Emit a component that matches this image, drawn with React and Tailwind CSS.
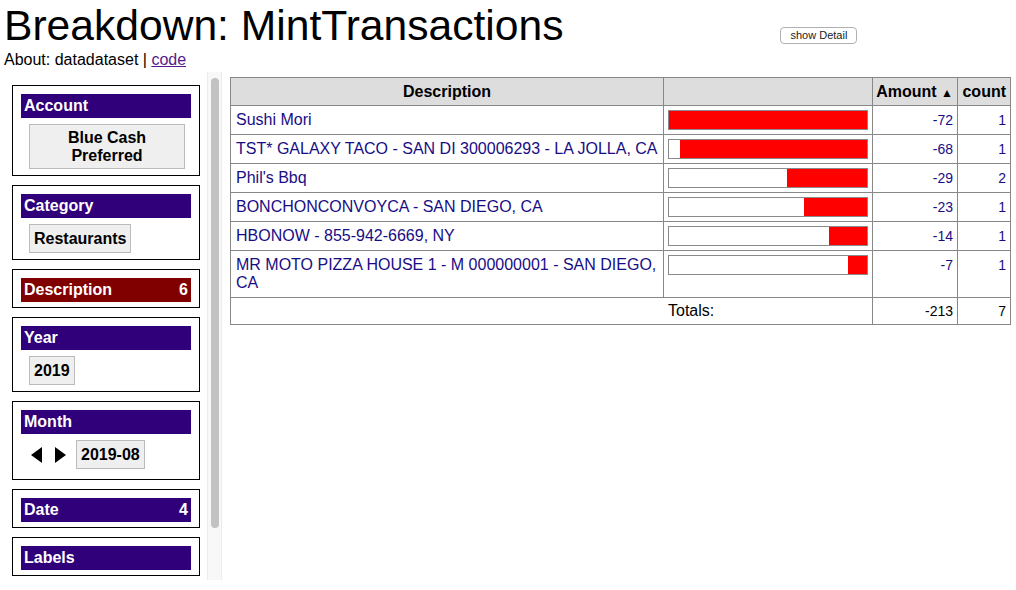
import React from 'react';

const rows = [
  { desc: 'Sushi Mori', amount: -72, count: 1 },
  { desc: 'TST* GALAXY TACO - SAN DI 300006293 - LA JOLLA, CA', amount: -68, count: 1 },
  { desc: "Phil's Bbq", amount: -29, count: 2 },
  { desc: 'BONCHONCONVOYCA - SAN DIEGO, CA', amount: -23, count: 1 },
  { desc: 'HBONOW - 855-942-6669, NY', amount: -14, count: 1 },
  { desc: 'MR MOTO PIZZA HOUSE 1 - M 000000001 - SAN DIEGO, CA', amount: -7, count: 1 },
];

const maxAbs = 72;

const Header = ({ label, count, red }) => (
  <div
    className={`flex justify-between items-center h-[24px] pl-[3px] pr-[3px] text-white font-bold text-[16px] leading-[24px] ${
      red ? 'bg-[#800000]' : 'bg-[#2f0079]'
    }`}
  >
    <span>{label}</span>
    {count != null && <span>{count}</span>}
  </div>
);

const Chip = ({ children, className = 'py-[4.5px]' }) => (
  <div
    className={`bg-[#efefef] border border-[#bbbbbb] font-bold text-[16px] leading-[18px] text-black text-center px-[4px] ${className}`}
  >
    {children}
  </div>
);

const Facet = ({ label, count, red, children, extra = '' }) => (
  <div className="border border-black w-[188px] px-[8px] pt-[8px] pb-[5px]">
    <Header label={label} count={count} red={red} />
    {children && <div className={`mt-[6px] mb-[1px] pl-[8px] flex items-center ${extra}`}>{children}</div>}
  </div>
);

const Sidebar = () => (
  <div className="flex h-[508px] w-[222px] shrink-0">
    <div className="flex-1 overflow-hidden pl-[12px] pt-[13px] flex flex-col gap-[9px]">
      <Facet label="Account">
        <Chip className="w-[156px] py-[3.5px]">Blue Cash Preferred</Chip>
      </Facet>
      <Facet label="Category">
        <Chip>Restaurants</Chip>
      </Facet>
      <Facet label="Description" count={6} red />
      <Facet label="Year">
        <Chip>2019</Chip>
      </Facet>
      <Facet label="Month" extra="pb-[4px]">
        <svg width="12" height="16" viewBox="0 0 12 16" className="ml-[2px] mr-[11px]">
          <polygon points="11,0 11,16 0,8" fill="black" />
        </svg>
        <svg width="12" height="16" viewBox="0 0 12 16" className="mr-[10px]">
          <polygon points="1,0 1,16 12,8" fill="black" />
        </svg>
        <Chip>2019-08</Chip>
      </Facet>
      <Facet label="Date" count={4} />
      <Facet label="Labels" />
    </div>
    {/* scrollbar */}
    <div className="w-[15px] shrink-0 bg-[#f8f8f8] border-l border-r border-[#ececec] flex justify-center pt-[6px]">
      <div className="w-[8px] h-[450px] rounded-full bg-[#c2c2c2]" />
    </div>
  </div>
);

const Bar = ({ amount }) => {
  const pct = (Math.abs(amount) / maxAbs) * 100;
  return (
    <div className="w-[200px] h-[20px] border border-[#8a8a8a] bg-white flex justify-end">
      <div className="h-full bg-[#ff0000]" style={{ width: `${pct}%` }} />
    </div>
  );
};

const App = () => {
  return (
    <div className="w-[1016px] h-[590px] bg-white text-black overflow-hidden" style={{ fontFamily: '"Liberation Sans", Arial, sans-serif' }}>
      <div className="flex items-start">
        <h1 className="text-[42.6px] leading-[51px] font-normal pl-[4px] whitespace-nowrap">Breakdown: MintTransactions</h1>
        <button className="ml-[217px] mt-[27px] h-[17px] px-[9px] text-[11px] leading-[15px] bg-white border border-[#b0b0b0] rounded-[4px] text-[#222]">
          show Detail
        </button>
      </div>
      <div className="pl-[4px] text-[16px] leading-[18px]">
        About: datadataset | <a href="#" className="text-[#551a8b] underline">code</a>
      </div>
      <div className="flex mt-[3px]">
        <Sidebar />
        <div className="pl-[8px] pt-[5px]">
          <table className="table-fixed border-collapse w-[780px] text-[16px] leading-[18px]">
            <colgroup>
              <col className="w-[433px]" />
              <col className="w-[209px]" />
              <col className="w-[85px]" />
              <col className="w-[53px]" />
            </colgroup>
            <thead>
              <tr className="bg-[#dddddd] h-[28px]">
                <th className="border border-[#888] font-bold text-center">Description</th>
                <th className="border border-[#888]"></th>
                <th className="border border-[#888] font-bold text-right pr-[4px] pt-[2px] whitespace-nowrap">
                  Amount <span className="text-[12px]">▲</span>
                </th>
                <th className="border border-[#888] font-bold text-right pr-[4px]">count</th>
              </tr>
            </thead>
            <tbody>
              {rows.map((r) => (
                <tr key={r.desc}>
                  <td className="border border-[#888] align-top px-[5px] py-[5px] text-[#180d85]">{r.desc}</td>
                  <td className="border border-[#888] align-top pl-[4px] pt-[4px] pb-[4px]">
                    <Bar amount={r.amount} />
                  </td>
                  <td className="border border-[#888] align-top text-right pr-[4px] pt-[6px] text-[14px] leading-[16px] text-[#180d85]">{r.amount}</td>
                  <td className="border border-[#888] align-top text-right pr-[4px] pt-[6px] text-[14px] leading-[16px] text-[#180d85]">{r.count}</td>
                </tr>
              ))}
              <tr className="h-[27px]">
                <td colSpan={2} className="border border-[#888] pl-[437px]">Totals:</td>
                <td className="border border-[#888] text-right pr-[4px] text-[14px]">-213</td>
                <td className="border border-[#888] text-right pr-[4px] text-[14px]">7</td>
              </tr>
            </tbody>
          </table>
        </div>
      </div>
    </div>
  );
};

export default App;
